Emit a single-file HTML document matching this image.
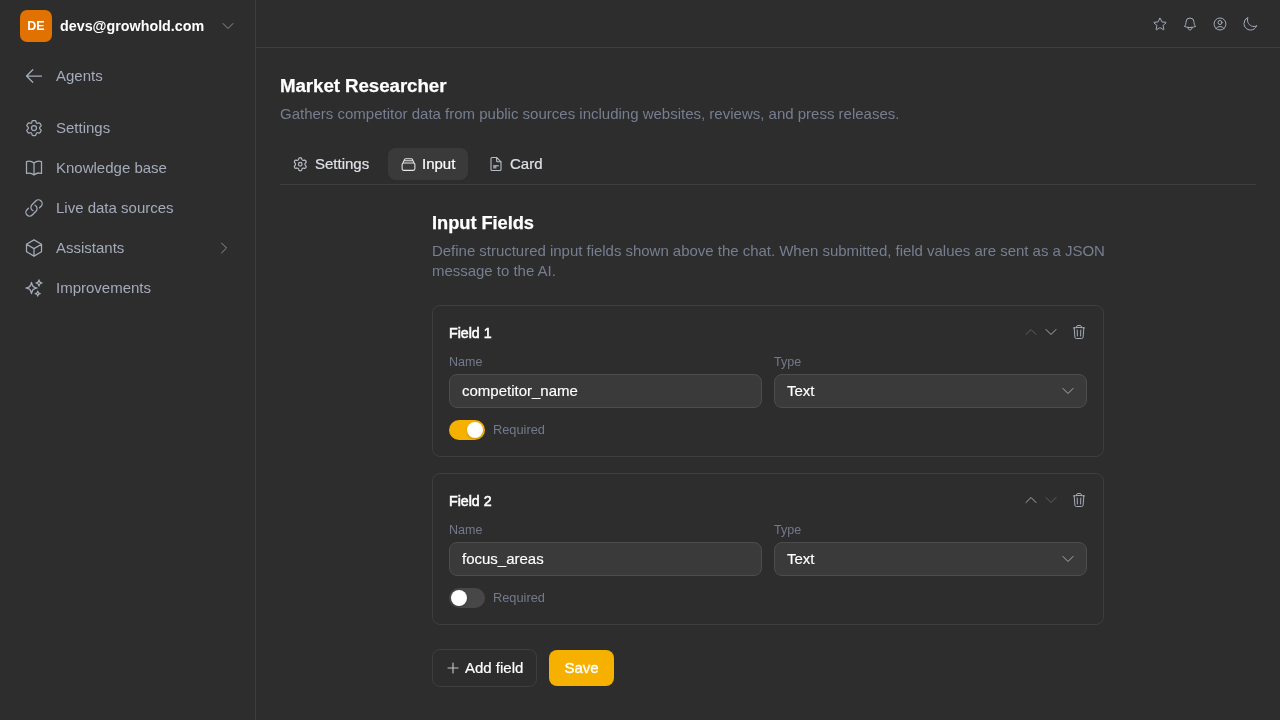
<!DOCTYPE html>
<html><head><meta charset="utf-8">
<style>
*{box-sizing:border-box;margin:0;padding:0}
html,body{width:1280px;height:720px;overflow:hidden;background:#2d2d2d;font-family:"Liberation Sans",sans-serif;color:#fff}
#root{position:absolute;left:0;top:0;width:1280px;height:720px;background:#2d2d2d;will-change:transform}
.abs{position:absolute}
svg{display:block;overflow:visible}
.ic{fill:none;stroke-linecap:round;stroke-linejoin:round}
.side{position:absolute;left:0;top:0;width:256px;height:720px;border-right:1px solid #3e3e3e}
.avatar{position:absolute;left:20px;top:10px;width:32px;height:32px;border-radius:7px;background:#e17100;color:#fff;font-weight:700;font-size:12.5px;line-height:32px;text-align:center}
.email{position:absolute;left:60px;top:16px;font-size:14.3px;font-weight:700;line-height:20px;color:#fff}
.nav{position:absolute;left:56px;font-size:15px;line-height:20px;color:#a4abb9}
.nicon{position:absolute;left:24px;width:20px;height:20px}
.hdr{position:absolute;left:256px;top:0;width:1024px;height:48px;border-bottom:1px solid #3e3e3e}
.title{position:absolute;left:280px;top:74px;font-size:18.7px;font-weight:700;line-height:24px;color:#fff;-webkit-text-stroke:0.25px #fff;letter-spacing:-0.05px}
.desc{position:absolute;left:280px;top:104px;font-size:15px;line-height:20px;color:#767e90}
.tab{position:absolute;top:148px;height:32px;font-size:15px;line-height:32px;color:#dfe1e6;-webkit-text-stroke:0.2px #dfe1e6}
.tabline{position:absolute;left:280px;top:184px;width:976px;height:1px;background:#3e3e3e}
.h2{position:absolute;left:432px;top:210.5px;font-size:18.3px;font-weight:700;line-height:24px;color:#fff;-webkit-text-stroke:0.25px #fff;letter-spacing:-0.05px}
.desc2{position:absolute;left:432px;top:241px;width:680px;font-size:15px;line-height:20px;color:#767e90;letter-spacing:-0.025px}
.card{position:absolute;left:432px;width:672px;height:152px;border:1px solid #3e3e3e;border-radius:8px}
.ftitle{position:absolute;left:16px;top:16.5px;font-size:14.2px;font-weight:400;line-height:20px;color:#fff;-webkit-text-stroke:0.55px #fff}
.lbl{position:absolute;top:48px;font-size:12.5px;line-height:16px;color:#727a8b}
.inp{position:absolute;top:68px;width:313px;height:34px;border:1px solid #4d4d4d;border-radius:8px;background:#3a3a3a;font-size:15px;line-height:31px;padding-left:12px;color:#fff;-webkit-text-stroke:0.15px #fff}
.tog{position:absolute;left:16px;top:114px;width:36px;height:20px;border-radius:10px}
.knob{position:absolute;top:2px;width:16px;height:16px;border-radius:50%;background:#fff;box-shadow:0 1px 2px rgba(0,0,0,.18)}
.req{position:absolute;left:60px;top:116px;font-size:12.8px;line-height:16px;color:#727a8b}
.btn{position:absolute;top:649px;height:38px;border-radius:8px;font-size:15px;line-height:36px}
</style></head>
<body><div id="root">
<div class="side">
  <div class="avatar">DE</div>
  <div class="email">devs@growhold.com</div>
  <svg class="abs ic" style="left:220px;top:18px" width="16" height="16" viewBox="0 0 24 24"><path d="m19.5 8.25-7.5 7.5-7.5-7.5" stroke="#8b909a" stroke-width="1.5"/></svg>

  <svg class="nicon ic" style="top:66px" viewBox="0 0 24 24"><path d="M10.5 19.5 3 12m0 0 7.5-7.5M3 12h18" stroke="#a4abb9" stroke-width="1.5"/></svg>
  <div class="nav" style="top:66px">Agents</div>

  <svg class="nicon ic" style="top:118px" viewBox="0 0 24 24" stroke="#a4abb9" stroke-width="1.5"><path d="M9.594 3.94c.09-.542.56-.94 1.11-.94h2.593c.55 0 1.02.398 1.11.94l.213 1.281c.063.374.313.686.645.87.074.04.147.083.22.127.325.196.72.257 1.075.124l1.217-.456a1.125 1.125 0 0 1 1.37.49l1.296 2.247a1.125 1.125 0 0 1-.26 1.431l-1.003.827c-.293.241-.438.613-.43.992a7.723 7.723 0 0 1 0 .255c-.008.378.137.75.43.991l1.004.827c.424.35.534.955.26 1.43l-1.298 2.247a1.125 1.125 0 0 1-1.369.491l-1.217-.456c-.355-.133-.75-.072-1.076.124a6.47 6.47 0 0 1-.22.128c-.331.183-.581.495-.644.869l-.213 1.281c-.09.543-.56.94-1.11.94h-2.594c-.55 0-1.019-.398-1.11-.94l-.213-1.281c-.062-.374-.312-.686-.644-.87a6.52 6.52 0 0 1-.22-.127c-.325-.196-.72-.257-1.076-.124l-1.217.456a1.125 1.125 0 0 1-1.369-.49l-1.297-2.247a1.125 1.125 0 0 1 .26-1.431l1.004-.827c.292-.24.437-.613.43-.991a6.932 6.932 0 0 1 0-.255c.007-.38-.138-.751-.43-.992l-1.004-.827a1.125 1.125 0 0 1-.26-1.43l1.297-2.247a1.125 1.125 0 0 1 1.37-.491l1.216.456c.356.133.751.072 1.076-.124.072-.044.146-.086.22-.128.332-.183.582-.495.644-.869l.214-1.28Z"/><path d="M15 12a3 3 0 1 1-6 0 3 3 0 0 1 6 0Z"/></svg>
  <div class="nav" style="top:118px">Settings</div>

  <svg class="nicon ic" style="top:158px" viewBox="0 0 24 24" stroke="#a4abb9" stroke-width="1.5"><path d="M12 6.042A8.967 8.967 0 0 0 6 3.75c-1.052 0-2.062.18-3 .512v14.25A8.987 8.987 0 0 1 6 18c2.305 0 4.408.867 6 2.292m0-14.25a8.966 8.966 0 0 1 6-2.292c1.052 0 2.062.18 3 .512v14.25A8.987 8.987 0 0 0 18 18a8.967 8.967 0 0 0-6 2.292m0-14.25v14.25"/></svg>
  <div class="nav" style="top:158px">Knowledge base</div>

  <svg class="nicon ic" style="top:198px" viewBox="0 0 24 24" stroke="#a4abb9" stroke-width="1.5"><path d="M13.19 8.688a4.5 4.5 0 0 1 1.242 7.244l-4.5 4.5a4.5 4.5 0 0 1-6.364-6.364l1.757-1.757m13.35-.622 1.757-1.757a4.5 4.5 0 0 0-6.364-6.364l-4.5 4.5a4.5 4.5 0 0 0 1.242 7.244"/></svg>
  <div class="nav" style="top:198px">Live data sources</div>

  <svg class="nicon ic" style="top:238px" viewBox="0 0 24 24" stroke="#a4abb9" stroke-width="1.5"><path d="m21 7.5-9-5.25L3 7.5m18 0-9 5.25m9-5.25v9l-9 5.25M3 7.5l9 5.25M3 7.5v9l9 5.25m0-9v9"/></svg>
  <div class="nav" style="top:238px">Assistants</div>
  <svg class="abs ic" style="left:216px;top:240px" width="16" height="16" viewBox="0 0 24 24"><path d="m8.25 4.5 7.5 7.5-7.5 7.5" stroke="#8b909a" stroke-width="1.5"/></svg>

  <svg class="nicon ic" style="top:278px" viewBox="0 0 24 24" stroke="#a4abb9" stroke-width="1.5"><path d="M9.813 15.904 9 18.75l-.813-2.846a4.5 4.5 0 0 0-3.09-3.09L2.25 12l2.846-.813a4.5 4.5 0 0 0 3.090-3.09L9 5.25l.813 2.846a4.5 4.5 0 0 0 3.09 3.09L15.75 12l-2.846.813a4.5 4.5 0 0 0-3.09 3.09ZM18.259 8.715 18 9.75l-.259-1.035a3.375 3.375 0 0 0-2.455-2.456L14.25 6l1.036-.259a3.375 3.375 0 0 0 2.455-2.456L18 2.25l.259 1.035a3.375 3.375 0 0 0 2.456 2.456L21.750 6l-1.035.259a3.375 3.375 0 0 0-2.456 2.456ZM16.894 20.567 16.5 21.75l-.394-1.183a2.25 2.25 0 0 0-1.423-1.423L13.5 18.75l1.183-.394a2.25 2.25 0 0 0 1.423-1.423l.394-1.183.394 1.183a2.25 2.25 0 0 0 1.423 1.423l1.183.394-1.183.394a2.25 2.25 0 0 0-1.423 1.423Z"/></svg>
  <div class="nav" style="top:278px">Improvements</div>
</div>

<div class="hdr"></div>
<svg class="abs ic" style="left:1152px;top:16px" width="16" height="16" viewBox="0 0 24 24" stroke="#a4abb9" stroke-width="1.5"><path d="M11.48 3.499a.562.562 0 0 1 1.04 0l2.125 5.111a.563.563 0 0 0 .475.345l5.518.442c.499.04.701.663.321.988l-4.204 3.602a.563.563 0 0 0-.182.557l1.285 5.385a.562.562 0 0 1-.84.61l-4.725-2.885a.562.562 0 0 0-.586 0L6.982 20.54a.562.562 0 0 1-.84-.61l1.285-5.386a.562.562 0 0 0-.182-.557l-4.204-3.602a.562.562 0 0 1 .321-.988l5.518-.442a.563.563 0 0 0 .475-.345L11.48 3.5Z"/></svg>
<svg class="abs ic" style="left:1182px;top:16px" width="16" height="16" viewBox="0 0 24 24" stroke="#a4abb9" stroke-width="1.5"><path d="M14.857 17.082a23.848 23.848 0 0 0 5.454-1.31A8.967 8.967 0 0 1 18 9.75V9A6 6 0 0 0 6 9v.75a8.967 8.967 0 0 1-2.312 6.022c1.733.64 3.56 1.085 5.455 1.31m5.714 0a24.255 24.255 0 0 1-5.714 0m5.714 0a3 3 0 1 1-5.714 0"/></svg>
<svg class="abs ic" style="left:1212px;top:16px" width="16" height="16" viewBox="0 0 24 24" stroke="#a4abb9" stroke-width="1.5"><path d="M17.982 18.725A7.488 7.488 0 0 0 12 15.75a7.488 7.488 0 0 0-5.982 2.975m11.963 0a9 9 0 1 0-11.963 0m11.963 0A8.966 8.966 0 0 1 12 21a8.966 8.966 0 0 1-5.982-2.275M15 9.750a3 3 0 1 1-6 0 3 3 0 0 1 6 0Z"/></svg>
<svg class="abs ic" style="left:1242px;top:16px" width="16" height="16" viewBox="0 0 24 24" stroke="#a4abb9" stroke-width="1.5"><path d="M21.752 15.002A9.72 9.72 0 0 1 18 15.75c-5.385 0-9.75-4.365-9.75-9.75 0-1.33.266-2.597.748-3.752A9.753 9.753 0 0 0 3 11.25C3 16.635 7.365 21 12.75 21a9.753 9.753 0 0 0 9.002-5.998Z"/></svg>

<div class="title">Market Researcher</div>
<div class="desc">Gathers competitor data from public sources including websites, reviews, and press releases.</div>

<div class="tab" style="left:292px;width:84px;padding-left:23px">Settings</div>
<svg class="abs ic" style="left:291.75px;top:155.75px" width="16.5" height="16.5" viewBox="0 0 24 24" stroke="#b8bcc4" stroke-width="1.8"><path d="M12.00 2.50 L12.33 2.52 L12.66 2.59 L12.98 2.71 L13.28 2.87 L13.57 3.08 L13.84 3.35 L14.06 3.72 L14.17 4.44 L14.34 4.81 L14.51 5.10 L14.69 5.34 L14.87 5.55 L15.05 5.74 L15.25 5.89 L15.45 6.02 L15.67 6.13 L15.90 6.22 L16.15 6.29 L16.42 6.34 L16.72 6.38 L17.06 6.38 L17.46 6.34 L18.14 6.07 L18.57 6.08 L18.94 6.18 L19.27 6.32 L19.56 6.51 L19.82 6.73 L20.04 6.97 L20.23 7.25 L20.37 7.55 L20.48 7.87 L20.54 8.20 L20.55 8.55 L20.51 8.90 L20.41 9.27 L20.20 9.65 L19.63 10.10 L19.39 10.43 L19.23 10.73 L19.11 11.00 L19.02 11.26 L18.95 11.51 L18.91 11.76 L18.90 12.00 L18.91 12.24 L18.95 12.49 L19.02 12.74 L19.11 13.00 L19.23 13.27 L19.39 13.57 L19.63 13.90 L20.20 14.35 L20.41 14.73 L20.51 15.10 L20.55 15.45 L20.54 15.80 L20.48 16.13 L20.37 16.45 L20.23 16.75 L20.04 17.03 L19.82 17.27 L19.56 17.49 L19.27 17.68 L18.94 17.82 L18.57 17.92 L18.14 17.93 L17.46 17.66 L17.06 17.62 L16.72 17.62 L16.42 17.66 L16.15 17.71 L15.90 17.78 L15.67 17.87 L15.45 17.98 L15.25 18.11 L15.05 18.26 L14.87 18.45 L14.69 18.66 L14.51 18.90 L14.34 19.19 L14.17 19.56 L14.06 20.28 L13.84 20.65 L13.57 20.92 L13.28 21.13 L12.98 21.29 L12.66 21.41 L12.33 21.48 L12.00 21.50 L11.67 21.48 L11.34 21.41 L11.02 21.29 L10.72 21.13 L10.43 20.92 L10.16 20.65 L9.94 20.28 L9.83 19.56 L9.66 19.19 L9.49 18.90 L9.31 18.66 L9.13 18.45 L8.95 18.26 L8.75 18.11 L8.55 17.98 L8.33 17.87 L8.10 17.78 L7.85 17.71 L7.58 17.66 L7.28 17.62 L6.94 17.62 L6.54 17.66 L5.86 17.93 L5.43 17.92 L5.06 17.82 L4.73 17.68 L4.44 17.49 L4.18 17.27 L3.96 17.03 L3.77 16.75 L3.63 16.45 L3.52 16.13 L3.46 15.80 L3.45 15.45 L3.49 15.10 L3.59 14.73 L3.80 14.35 L4.37 13.90 L4.61 13.57 L4.77 13.27 L4.89 13.00 L4.98 12.74 L5.05 12.49 L5.09 12.24 L5.10 12.00 L5.09 11.76 L5.05 11.51 L4.98 11.26 L4.89 11.00 L4.77 10.73 L4.61 10.43 L4.37 10.10 L3.80 9.65 L3.59 9.27 L3.49 8.90 L3.45 8.55 L3.46 8.20 L3.52 7.87 L3.63 7.55 L3.77 7.25 L3.96 6.97 L4.18 6.73 L4.44 6.51 L4.73 6.32 L5.06 6.18 L5.43 6.08 L5.86 6.07 L6.54 6.34 L6.94 6.38 L7.28 6.38 L7.58 6.34 L7.85 6.29 L8.10 6.22 L8.33 6.13 L8.55 6.02 L8.75 5.89 L8.95 5.74 L9.13 5.55 L9.31 5.34 L9.49 5.10 L9.66 4.81 L9.83 4.44 L9.94 3.72 L10.16 3.35 L10.43 3.08 L10.72 2.87 L11.02 2.71 L11.34 2.59 L11.67 2.52Z"/><circle cx="12" cy="12" r="2.6"/></svg>

<div class="tab" style="left:388px;width:80px;background:#3a3a3a;border-radius:8px;padding-left:34px;color:#fff;-webkit-text-stroke:0.2px #fff">Input</div>
<svg class="abs ic" style="left:399.5px;top:155.5px" width="17" height="17" viewBox="0 0 24 24" stroke="#e8e8e8" stroke-width="1.5"><path d="M6 6.878V6a2.25 2.25 0 0 1 2.25-2.25h7.5A2.25 2.25 0 0 1 18 6v.878m-12 0c.235-.083.487-.128.75-.128h10.5c.263 0 .515.045.75.128m-12 0A2.25 2.25 0 0 0 4.5 9v.878m13.5-3A2.25 2.25 0 0 1 19.5 9v.878m0 0a2.246 2.246 0 0 0-.75-.128H5.25c-.263 0-.515.045-.75.128m15 0A2.25 2.25 0 0 1 21 12v6a2.25 2.25 0 0 1-2.25 2.25H5.25A2.25 2.25 0 0 1 3 18v-6c0-.98.626-1.813 1.5-2.122"/></svg>

<div class="tab" style="left:484px;width:66px;padding-left:26px">Card</div>
<svg class="abs ic" style="left:488px;top:156px" width="16" height="16" viewBox="0 0 16 16" stroke="#b8bcc4" stroke-width="1.1"><path d="M3 2.5c0-.6.4-1 1-1h4.6L13 5.9V13.5c0 .6-.4 1-1 1H4c-.6 0-1-.4-1-1Z"/><path d="M8.6 1.5v3.3c0 .6.4 1 1 1H13"/><path d="M5.2 9.1h5.6v1.5H8.4v1.9H5.2Z" fill="#9a9ea6" stroke="none"/></svg>
<div class="tabline"></div>

<div class="h2">Input Fields</div>
<div class="desc2">Define structured input fields shown above the chat. When submitted, field values are sent as a JSON message to the AI.</div>

<div class="card" style="top:305px">
  <div class="ftitle">Field 1</div>
  <svg class="abs ic" style="left:590px;top:18px" width="16" height="16" viewBox="0 0 24 24" stroke="#5c5f66" stroke-width="1.5"><path d="m4.5 15.75 7.5-7.5 7.5 7.5"/></svg>
  <svg class="abs ic" style="left:610px;top:18px" width="16" height="16" viewBox="0 0 24 24" stroke="#a4abb9" stroke-width="1.5"><path d="m19.5 8.25-7.5 7.5-7.5-7.5"/></svg>
  <svg class="abs ic" style="left:638px;top:18px" width="16" height="16" viewBox="0 0 24 24" stroke="#a4abb9" stroke-width="1.5"><path d="m14.74 9-.346 9m-4.788 0L9.26 9m9.968-3.21c.342.052.682.107 1.022.166m-1.022-.165L18.16 19.673a2.25 2.25 0 0 1-2.244 2.077H8.084a2.25 2.25 0 0 1-2.244-2.077L4.772 5.79m14.456 0a48.108 48.108 0 0 0-3.478-.397m-12 .562c.34-.059.68-.114 1.022-.165m0 0a48.11 48.11 0 0 1 3.478-.397m7.5 0v-.916c0-1.18-.91-2.164-2.09-2.201a51.964 51.964 0 0 0-3.32 0c-1.18.037-2.09 1.022-2.09 2.201v.916m7.5 0a48.667 48.667 0 0 0-7.5 0"/></svg>
  <div class="lbl" style="left:16px">Name</div>
  <div class="lbl" style="left:341px">Type</div>
  <div class="inp" style="left:16px">competitor_name</div>
  <div class="inp" style="left:341px">Text</div>
  <svg class="abs ic" style="left:627px;top:77px" width="16" height="16" viewBox="0 0 24 24" stroke="#a4abb9" stroke-width="1.5"><path d="m19.5 8.25-7.5 7.5-7.5-7.5"/></svg>
  <div class="tog" style="background:#f5b000"><div class="knob" style="left:18px"></div></div>
  <div class="req">Required</div>
</div>

<div class="card" style="top:473px">
  <div class="ftitle">Field 2</div>
  <svg class="abs ic" style="left:590px;top:18px" width="16" height="16" viewBox="0 0 24 24" stroke="#a4abb9" stroke-width="1.5"><path d="m4.5 15.75 7.5-7.5 7.5 7.5"/></svg>
  <svg class="abs ic" style="left:610px;top:18px" width="16" height="16" viewBox="0 0 24 24" stroke="#5c5f66" stroke-width="1.5"><path d="m19.5 8.25-7.5 7.5-7.5-7.5"/></svg>
  <svg class="abs ic" style="left:638px;top:18px" width="16" height="16" viewBox="0 0 24 24" stroke="#a4abb9" stroke-width="1.5"><path d="m14.74 9-.346 9m-4.788 0L9.26 9m9.968-3.21c.342.052.682.107 1.022.166m-1.022-.165L18.16 19.673a2.25 2.25 0 0 1-2.244 2.077H8.084a2.25 2.25 0 0 1-2.244-2.077L4.772 5.79m14.456 0a48.108 48.108 0 0 0-3.478-.397m-12 .562c.34-.059.68-.114 1.022-.165m0 0a48.11 48.11 0 0 1 3.478-.397m7.5 0v-.916c0-1.18-.91-2.164-2.09-2.201a51.964 51.964 0 0 0-3.32 0c-1.18.037-2.09 1.022-2.09 2.201v.916m7.5 0a48.667 48.667 0 0 0-7.5 0"/></svg>
  <div class="lbl" style="left:16px">Name</div>
  <div class="lbl" style="left:341px">Type</div>
  <div class="inp" style="left:16px">focus_areas</div>
  <div class="inp" style="left:341px">Text</div>
  <svg class="abs ic" style="left:627px;top:77px" width="16" height="16" viewBox="0 0 24 24" stroke="#a4abb9" stroke-width="1.5"><path d="m19.5 8.25-7.5 7.5-7.5-7.5"/></svg>
  <div class="tog" style="background:#474747"><div class="knob" style="left:2px"></div></div>
  <div class="req">Required</div>
</div>

<div class="btn" style="left:432px;width:105px;border:1px solid #3e3e3e;color:#fff;padding-left:32px;-webkit-text-stroke:0.2px #fff">Add field</div>
<svg class="abs ic" style="left:444.5px;top:660px" width="16" height="16" viewBox="0 0 24 24" stroke="#c4c4c4" stroke-width="1.7"><path d="M12 4.5v15m7.5-7.5h-15"/></svg>
<div class="btn" style="left:549px;top:650px;height:36px;line-height:36px;width:65px;background:#f5b000;color:#fff;text-align:center;-webkit-text-stroke:0.35px #fff">Save</div>
</div></body></html>
